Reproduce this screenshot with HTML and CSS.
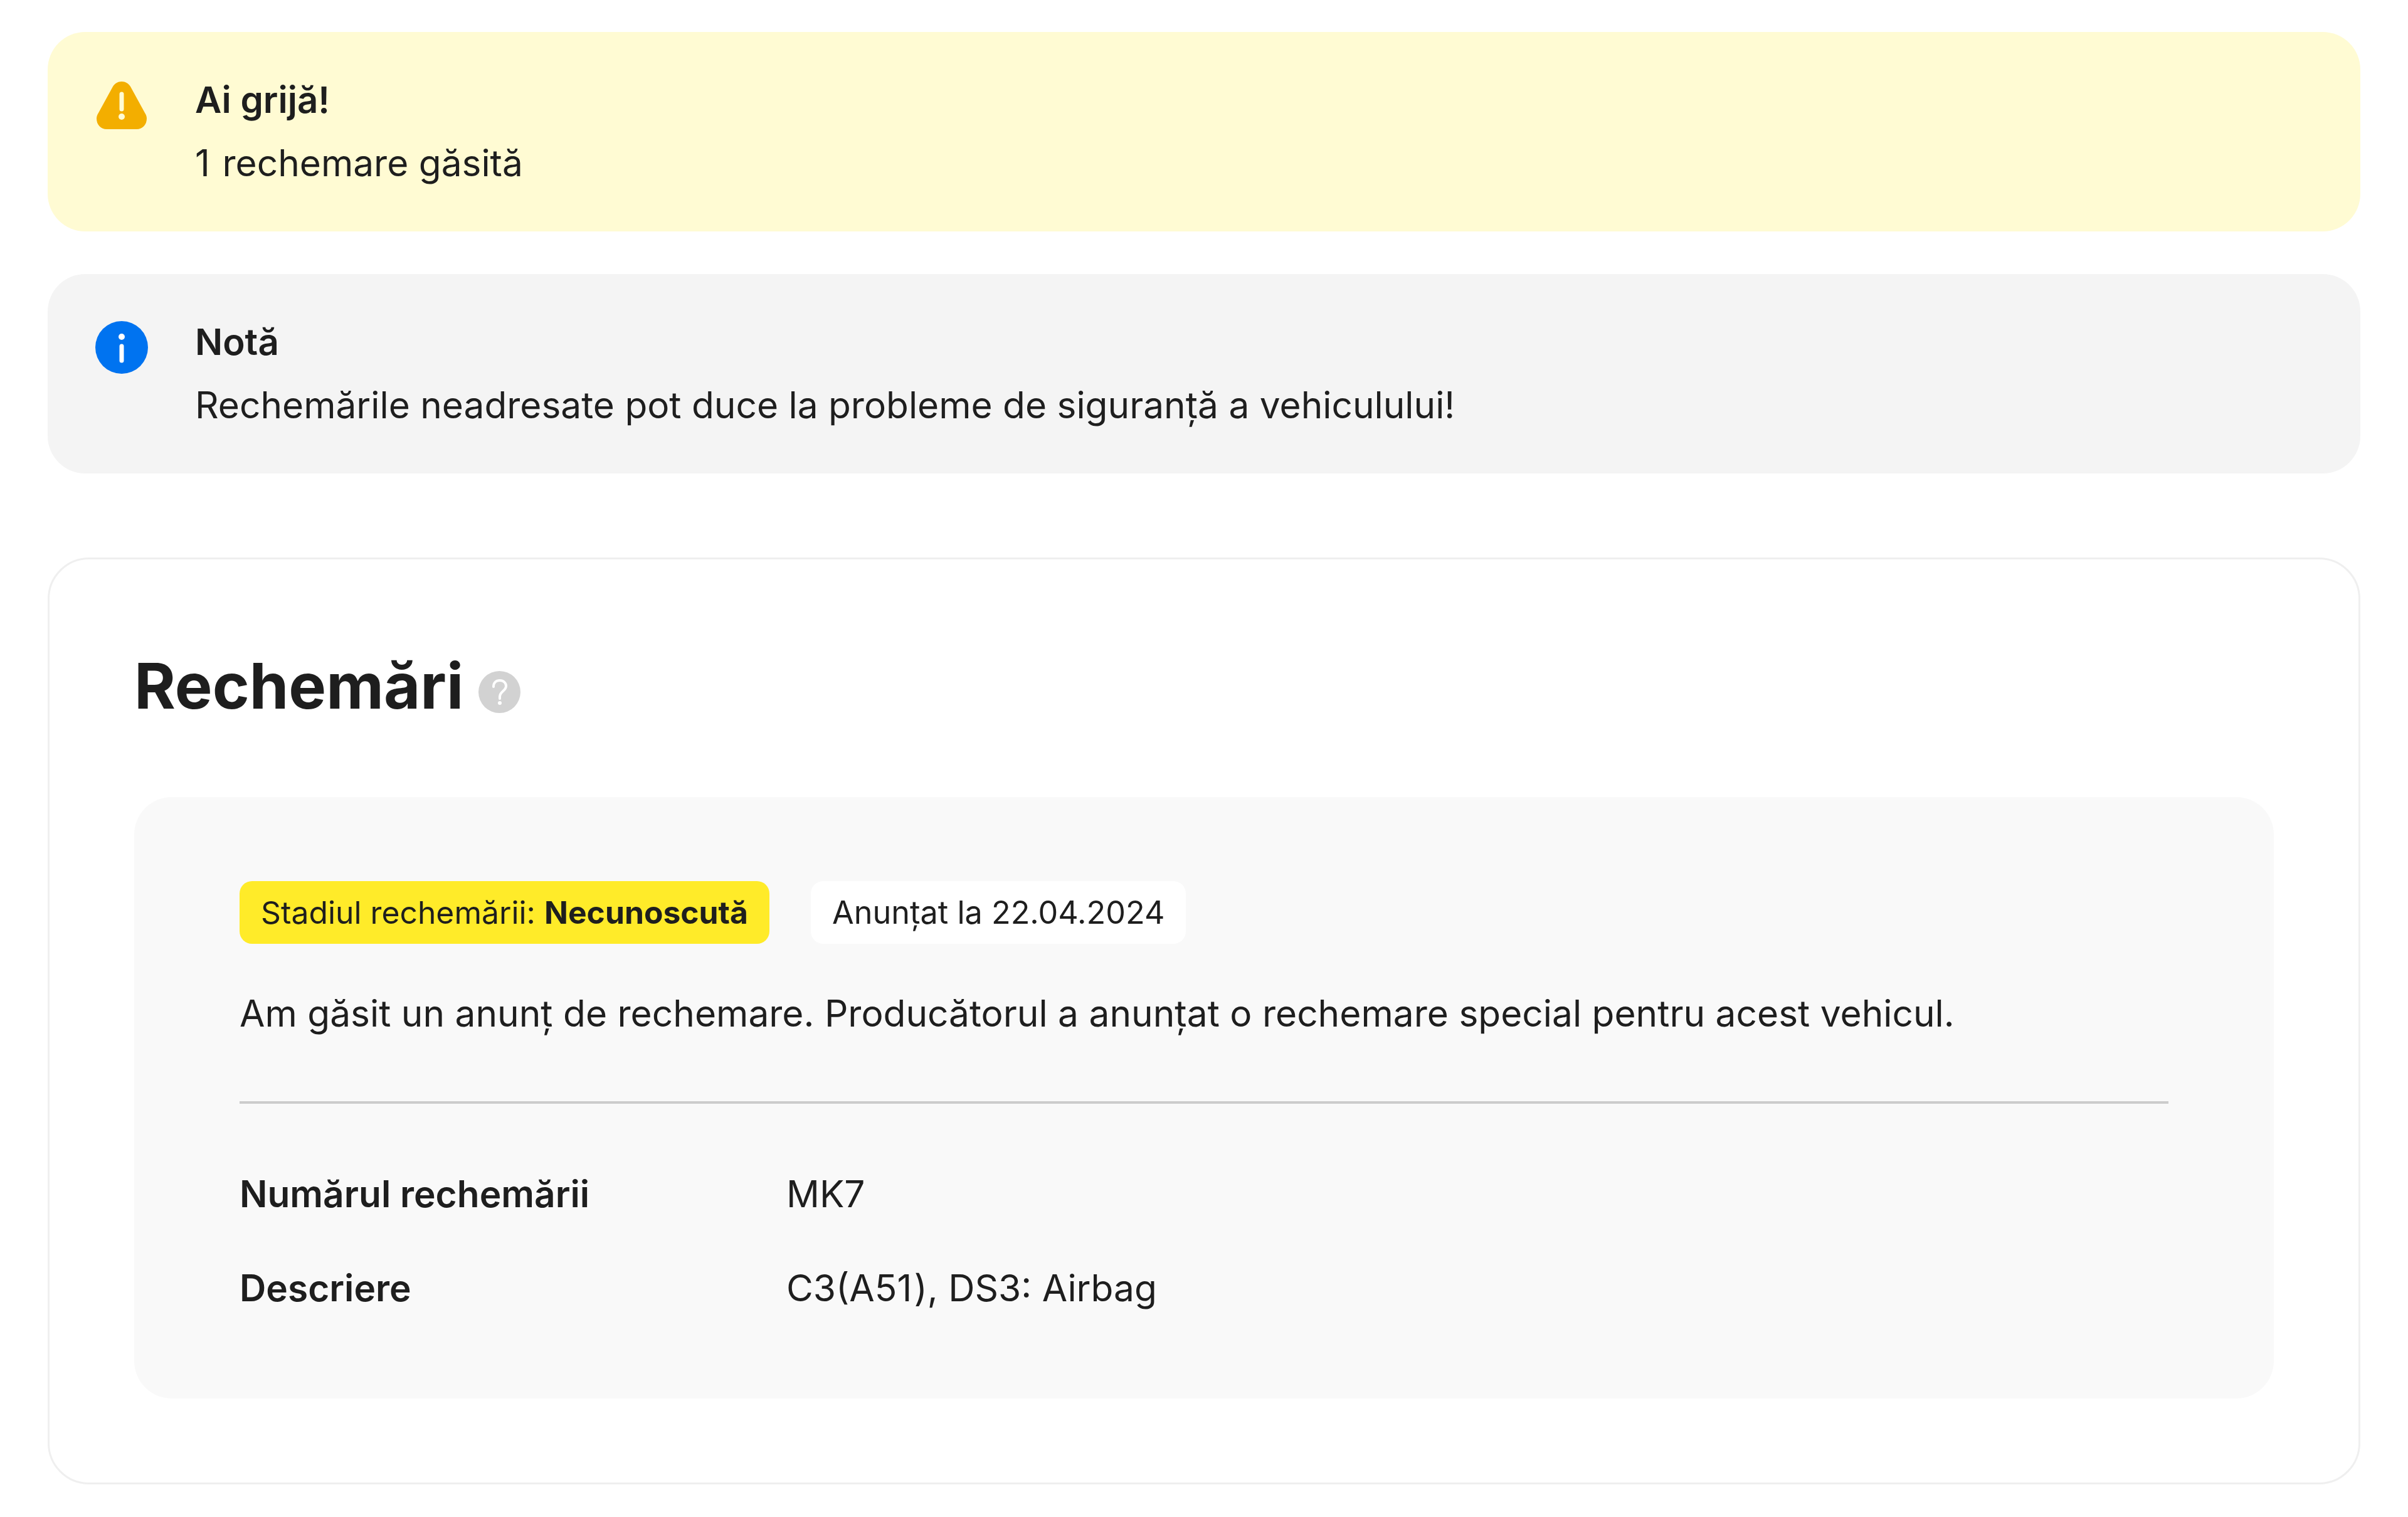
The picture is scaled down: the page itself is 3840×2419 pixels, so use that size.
FILE: index.html
```html
<!DOCTYPE html>
<html lang="ro">
<head>
<meta charset="utf-8">
<title>Rechemări</title>
<link rel="stylesheet" href="styles.css">
</head>
<body>
<main class="page">
  <section class="alert alert-warn">
    <svg class="alert-icon" viewBox="0 0 84 84"><path fill="#f3ae00" d="M42 4c-6 0-11 3-14 8L5 54c-2 3-3 6-3 9 0 10 7 17 16 17h48c9 0 16-7 16-17 0-3-1-6-3-9L56 12C53 7 48 4 42 4z"/><path fill="none" stroke="#fffbd3" stroke-width="7" stroke-linecap="round" d="M42 24v24"/><circle cx="42" cy="60" r="5" fill="#fffbd3"/></svg>
    <div class="alert-body">
      <div class="alert-title">Ai grijă!</div>
      <div class="alert-text"><span class="wide-digit">1</span> rechemare găsită</div>
    </div>
  </section>
  <section class="alert alert-note">
    <svg class="alert-icon" viewBox="0 0 84 84"><circle cx="42" cy="42" r="42" fill="#0073f0"/><circle cx="42" cy="25" r="5" fill="#fff"/><path stroke="#fff" stroke-width="7" stroke-linecap="round" d="M42 40v23"/></svg>
    <div class="alert-body">
      <div class="alert-title">Notă</div>
      <div class="alert-text">Rechemările neadresate pot duce la probleme de siguranță a vehiculului!</div>
    </div>
  </section>
  <section class="card">
    <h1 class="card-title">Rechemări <svg class="help" viewBox="0 0 67 67"><circle cx="33.5" cy="33.5" r="33.5" fill="#d2d2d2"/><path fill="none" stroke="#fff" stroke-width="4" stroke-linecap="round" d="M24 25c0-6 4-10 10-10s10 4 10 9c0 8-10 8-10 17v3"/><circle cx="34" cy="51" r="3" fill="#fff"/></svg></h1>
    <div class="recall">
      <div class="tags">
        <span class="tag tag-status">Stadiul rechemării: <b>Necunoscută</b></span>
        <span class="tag tag-date">Anunțat la 22.04.2024</span>
      </div>
      <p class="recall-text">Am găsit un anunț de rechemare. Producătorul a anunțat o rechemare special pentru acest vehicul.</p>
      <dl class="facts">
        <dt>Numărul rechemării</dt><dd>MK7</dd>
        <dt>Descriere</dt><dd>C3(A5<span class="wide-digit">1</span>), DS3: Airbag</dd>
      </dl>
    </div>
  </section>
</main>
</body>
</html>
```
FILE: styles.css
```css
* { box-sizing: border-box; }
html, body { margin: 0; background: #fff; }
body { font-family: Inter, "Liberation Sans", sans-serif; color: #1e1e1e; }
.page { padding: 51px 76px 51px; display: flex; flex-direction: column; }
.alert { height: 318px; border-radius: 60px; padding: 75px 76px 0; display: flex; gap: 75px; margin-bottom: 68px; }
.alert-warn { background: #fffbd3; }
.alert-note { background: #f4f4f4; margin-bottom: 134px; }
.alert-icon { width: 84px; height: 84px; flex: none; }
.alert-title { font-size: 58.2px; font-weight: 600; line-height: 72px; margin-top: -3px; }
.alert-text { font-size: 58.55px; line-height: 72px; margin-top: 29px; }
.wide-digit { letter-spacing: 0.055em; }
.card { height: 1478px; border: 3px solid #efefef; border-radius: 66px; padding: 142px 135px 0; }
.card-title { margin: 0; font-size: 100.5px; font-weight: 700; line-height: 120px; height: 237px; }
.help { width: 67px; height: 67px; vertical-align: -7px; }
.recall { height: 959px; background: #f9f9f9; border-radius: 60px; padding: 134px 168px 0; }
.tags { display: flex; gap: 66px; }
.tag { height: 100px; padding: 0 34px; border-radius: 20px; font-size: 49.8px; line-height: 100px; }
.tag b { font-weight: 700; }
.tag-status { background: #ffeb29; }
.tag-date { background: #fff; font-size: 50.3px; }
.recall-text { margin: 0; font-size: 58.6px; line-height: 72px; padding: 75px 0 104px; border-bottom: 4px solid #ccc; }
.facts { margin: 0; padding-top: 108px; display: grid; grid-template-columns: 872px 1fr; row-gap: 78px; font-size: 58.6px; line-height: 72px; }
.facts dt { font-weight: 600; }
.facts dd { margin: 0; }
```
